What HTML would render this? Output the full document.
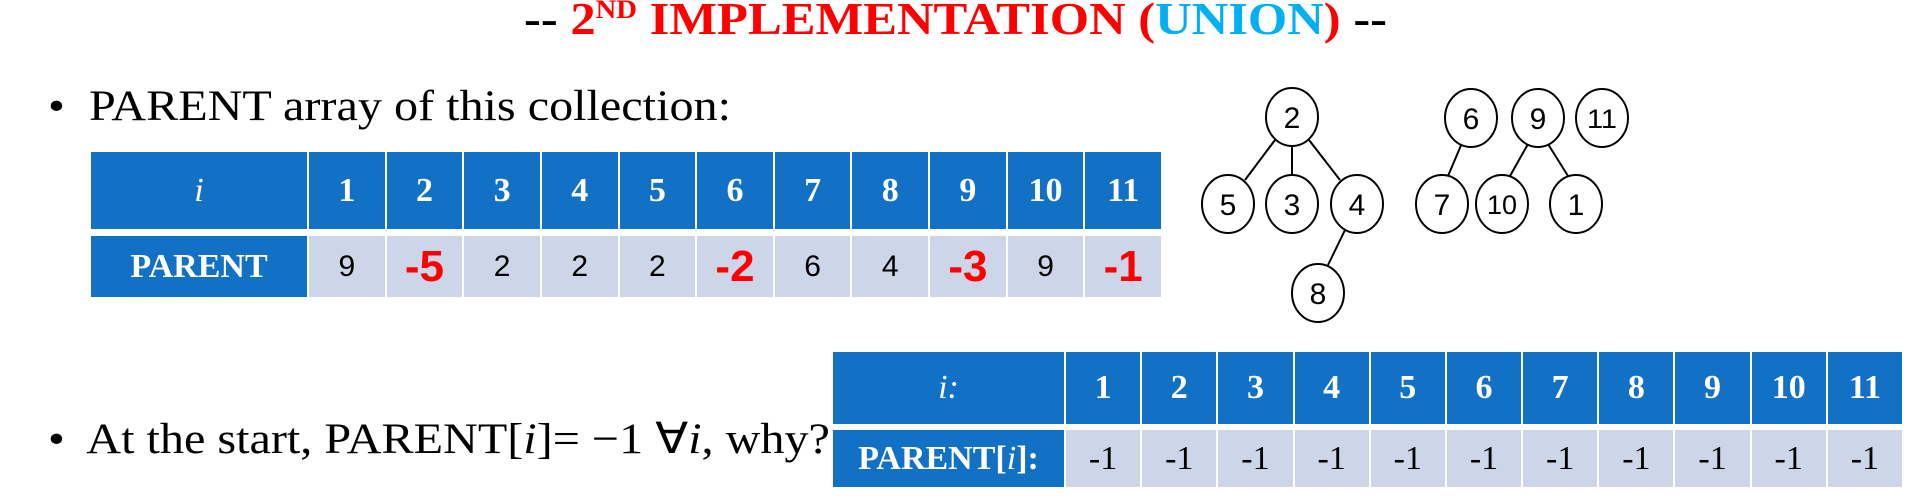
<!DOCTYPE html>
<html><head><meta charset="utf-8"><style>
body{margin:0;width:1911px;height:499px;background:#fff;position:relative;overflow:hidden;font-family:"Liberation Serif",serif;}
.abs{position:absolute;white-space:nowrap;}
.title{left:0;width:1911px;text-align:center;top:-8px;font-size:46px;font-weight:bold;color:#000;transform:scaleX(1.1);transform-origin:center;}
.c{position:absolute;display:flex;align-items:center;justify-content:center;box-sizing:border-box;}
.h{background:#1270C5;color:#fff;font-weight:bold;font-family:"Liberation Serif",serif;font-size:34px;}
.v{background:#CDD5E8;color:#000;font-family:"Liberation Sans",sans-serif;font-size:30px;}
.r{color:#f00;font-weight:bold;font-size:44px;}
.b{font-size:43px;color:#000;transform:scaleX(1.12);transform-origin:left;}
</style></head><body>
<div class="abs title">-- <span style="color:#f00">2<sup style="font-size:26px;vertical-align:16px">ND</sup> IMPLEMENTATION (<span style="color:#00B0F0">UNION</span>)</span> --</div>
<div class="abs b" style="left:48px;top:82px">•&nbsp; PARENT array of this collection:</div>
<div class="abs b" style="left:48px;top:414px">•&nbsp; At the start, PARENT[<i>i</i>]= −1 ∀<i>i</i>, why?</div>
<div id="t1"></div><div id="t2"></div>
<svg class="abs" style="left:0;top:0" width="1911" height="499">
<g stroke="#000" stroke-width="2" fill="none">
<line x1="1275" y1="140" x2="1245" y2="180"/><line x1="1292" y1="146" x2="1292" y2="175"/><line x1="1309" y1="140" x2="1340" y2="180"/>
<line x1="1345" y1="230" x2="1328" y2="265"/>
<line x1="1462" y1="143" x2="1448" y2="176"/><line x1="1528" y1="144" x2="1510" y2="176"/><line x1="1548" y1="144" x2="1568" y2="176"/>
</g>
<g stroke="#000" stroke-width="2" fill="#fff">
<ellipse cx="1292" cy="117" rx="26" ry="29"/><ellipse cx="1228" cy="204" rx="26" ry="29"/><ellipse cx="1292" cy="204" rx="26" ry="29"/><ellipse cx="1357" cy="204" rx="26" ry="29"/><ellipse cx="1318" cy="293" rx="26" ry="29"/>
<ellipse cx="1471" cy="118" rx="26" ry="29"/><ellipse cx="1538" cy="118" rx="26" ry="29"/><ellipse cx="1602" cy="118" rx="26" ry="29"/>
<ellipse cx="1442" cy="204" rx="26" ry="29"/><ellipse cx="1502" cy="204" rx="26" ry="29"/><ellipse cx="1576" cy="204" rx="26" ry="29"/>
</g>
<g font-family="Liberation Sans,sans-serif" font-size="30" text-anchor="middle">
<text x="1292" y="128">2</text><text x="1228" y="215">5</text><text x="1292" y="215">3</text><text x="1357" y="215">4</text><text x="1318" y="304">8</text>
<text x="1471" y="129">6</text><text x="1538" y="129">9</text><text x="1602" y="128" font-size="27" textLength="30" lengthAdjust="spacingAndGlyphs">11</text>
<text x="1442" y="215">7</text><text x="1502" y="214" font-size="27">10</text><text x="1576" y="215">1</text>
</g>
</svg>
<script>
function tbl(id,x0,fw,x1,y0,h1,y1,h2,lab1,lab2,vals,fs){
 var el=document.getElementById(id),html='',cw=(x1-x0-fw)/11;
 html+='<div class="c h" style="left:'+x0+'px;top:'+y0+'px;width:'+fw+'px;height:'+h1+'px;font-weight:normal;font-style:italic">'+lab1+'</div>';
 html+='<div class="c h" style="left:'+x0+'px;top:'+y1+'px;width:'+fw+'px;height:'+h2+'px">'+lab2+'</div>';
 for(var k=0;k<11;k++){var x=x0+fw+k*cw;
  html+='<div class="c h" style="left:'+(x+2)+'px;top:'+y0+'px;width:'+(cw-2)+'px;height:'+h1+'px">'+(k+1)+'</div>';
  var v=vals[k],red=v.length>1&&v[0]=='-'&&fs==0;
  html+='<div class="c v'+(red?' r':'')+'" style="left:'+(x+2)+'px;top:'+y1+'px;width:'+(cw-2)+'px;height:'+h2+'px;'+(fs?'font-family:Liberation Serif,serif;font-size:34px':'')+'">'+v+'</div>';}
 el.innerHTML=html;}
tbl('t1',91,216,1161,152,77,236,61,'i','PARENT',['9','-5','2','2','2','-2','6','4','-3','9','-1'],0);
tbl('t2',833,231,1902,352,72,430,57,'i:','PARENT[<i style="font-weight:normal">i</i>]:',['-1','-1','-1','-1','-1','-1','-1','-1','-1','-1','-1'],1);
</script>
</body></html>
